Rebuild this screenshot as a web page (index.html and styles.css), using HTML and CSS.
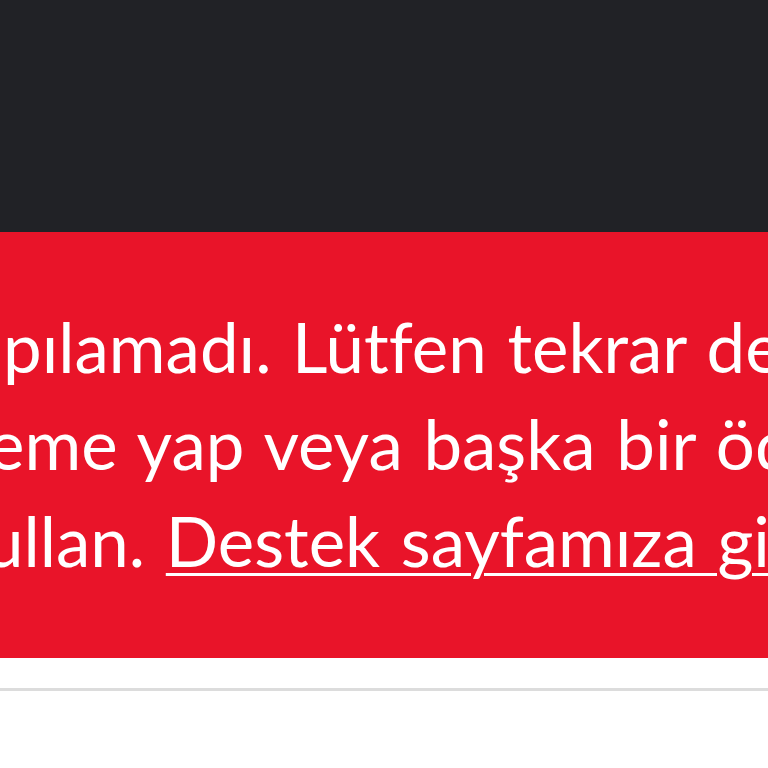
FILE: index.html
```html
<!DOCTYPE html>
<html lang="tr">
<head>
<meta charset="utf-8">
<link rel="stylesheet" href="styles.css">
</head>
<body>
<div class="topbar"></div>
<div class="alert">
  <div class="line line1">pılamadı. Lütfen tekrar dene</div>
  <div class="line line2">eme yap veya başka bir ödeme</div>
  <div class="line line3">ullan. <a class="link" href="#">Destek sayfamıza git</a>.</div>
</div>
<div class="gap"></div>
<div class="rule"></div>
</body>
</html>
```
FILE: styles.css
```css
html, body {
  margin: 0;
  padding: 0;
  background: #ffffff;
  overflow: hidden;
}
.topbar {
  height: 232px;
  background: #212226;
}
.alert {
  background: #e91429;
  color: #ffffff;
  padding: 66px 0 69px 0;
  font-family: "Lato", "Noto Sans", sans-serif;
  font-size: 69px;
  line-height: 97px;
  word-spacing: 3px;
  font-variant-ligatures: none;
  overflow: hidden;
}
.line {
  white-space: nowrap;
}
.line1 { text-indent: 3px; }
.line2 { text-indent: -12px; }
.line3 { text-indent: -15px; }
.link {
  color: #ffffff;
  text-decoration: underline;
  text-decoration-thickness: 3px;
  text-underline-offset: 6px;
}
.gap {
  height: 30px;
  background: #ffffff;
}
.rule {
  height: 3px;
  background: #dcdcdc;
  box-shadow: 0 2px 3px rgba(0,0,0,0.05);
}
```
